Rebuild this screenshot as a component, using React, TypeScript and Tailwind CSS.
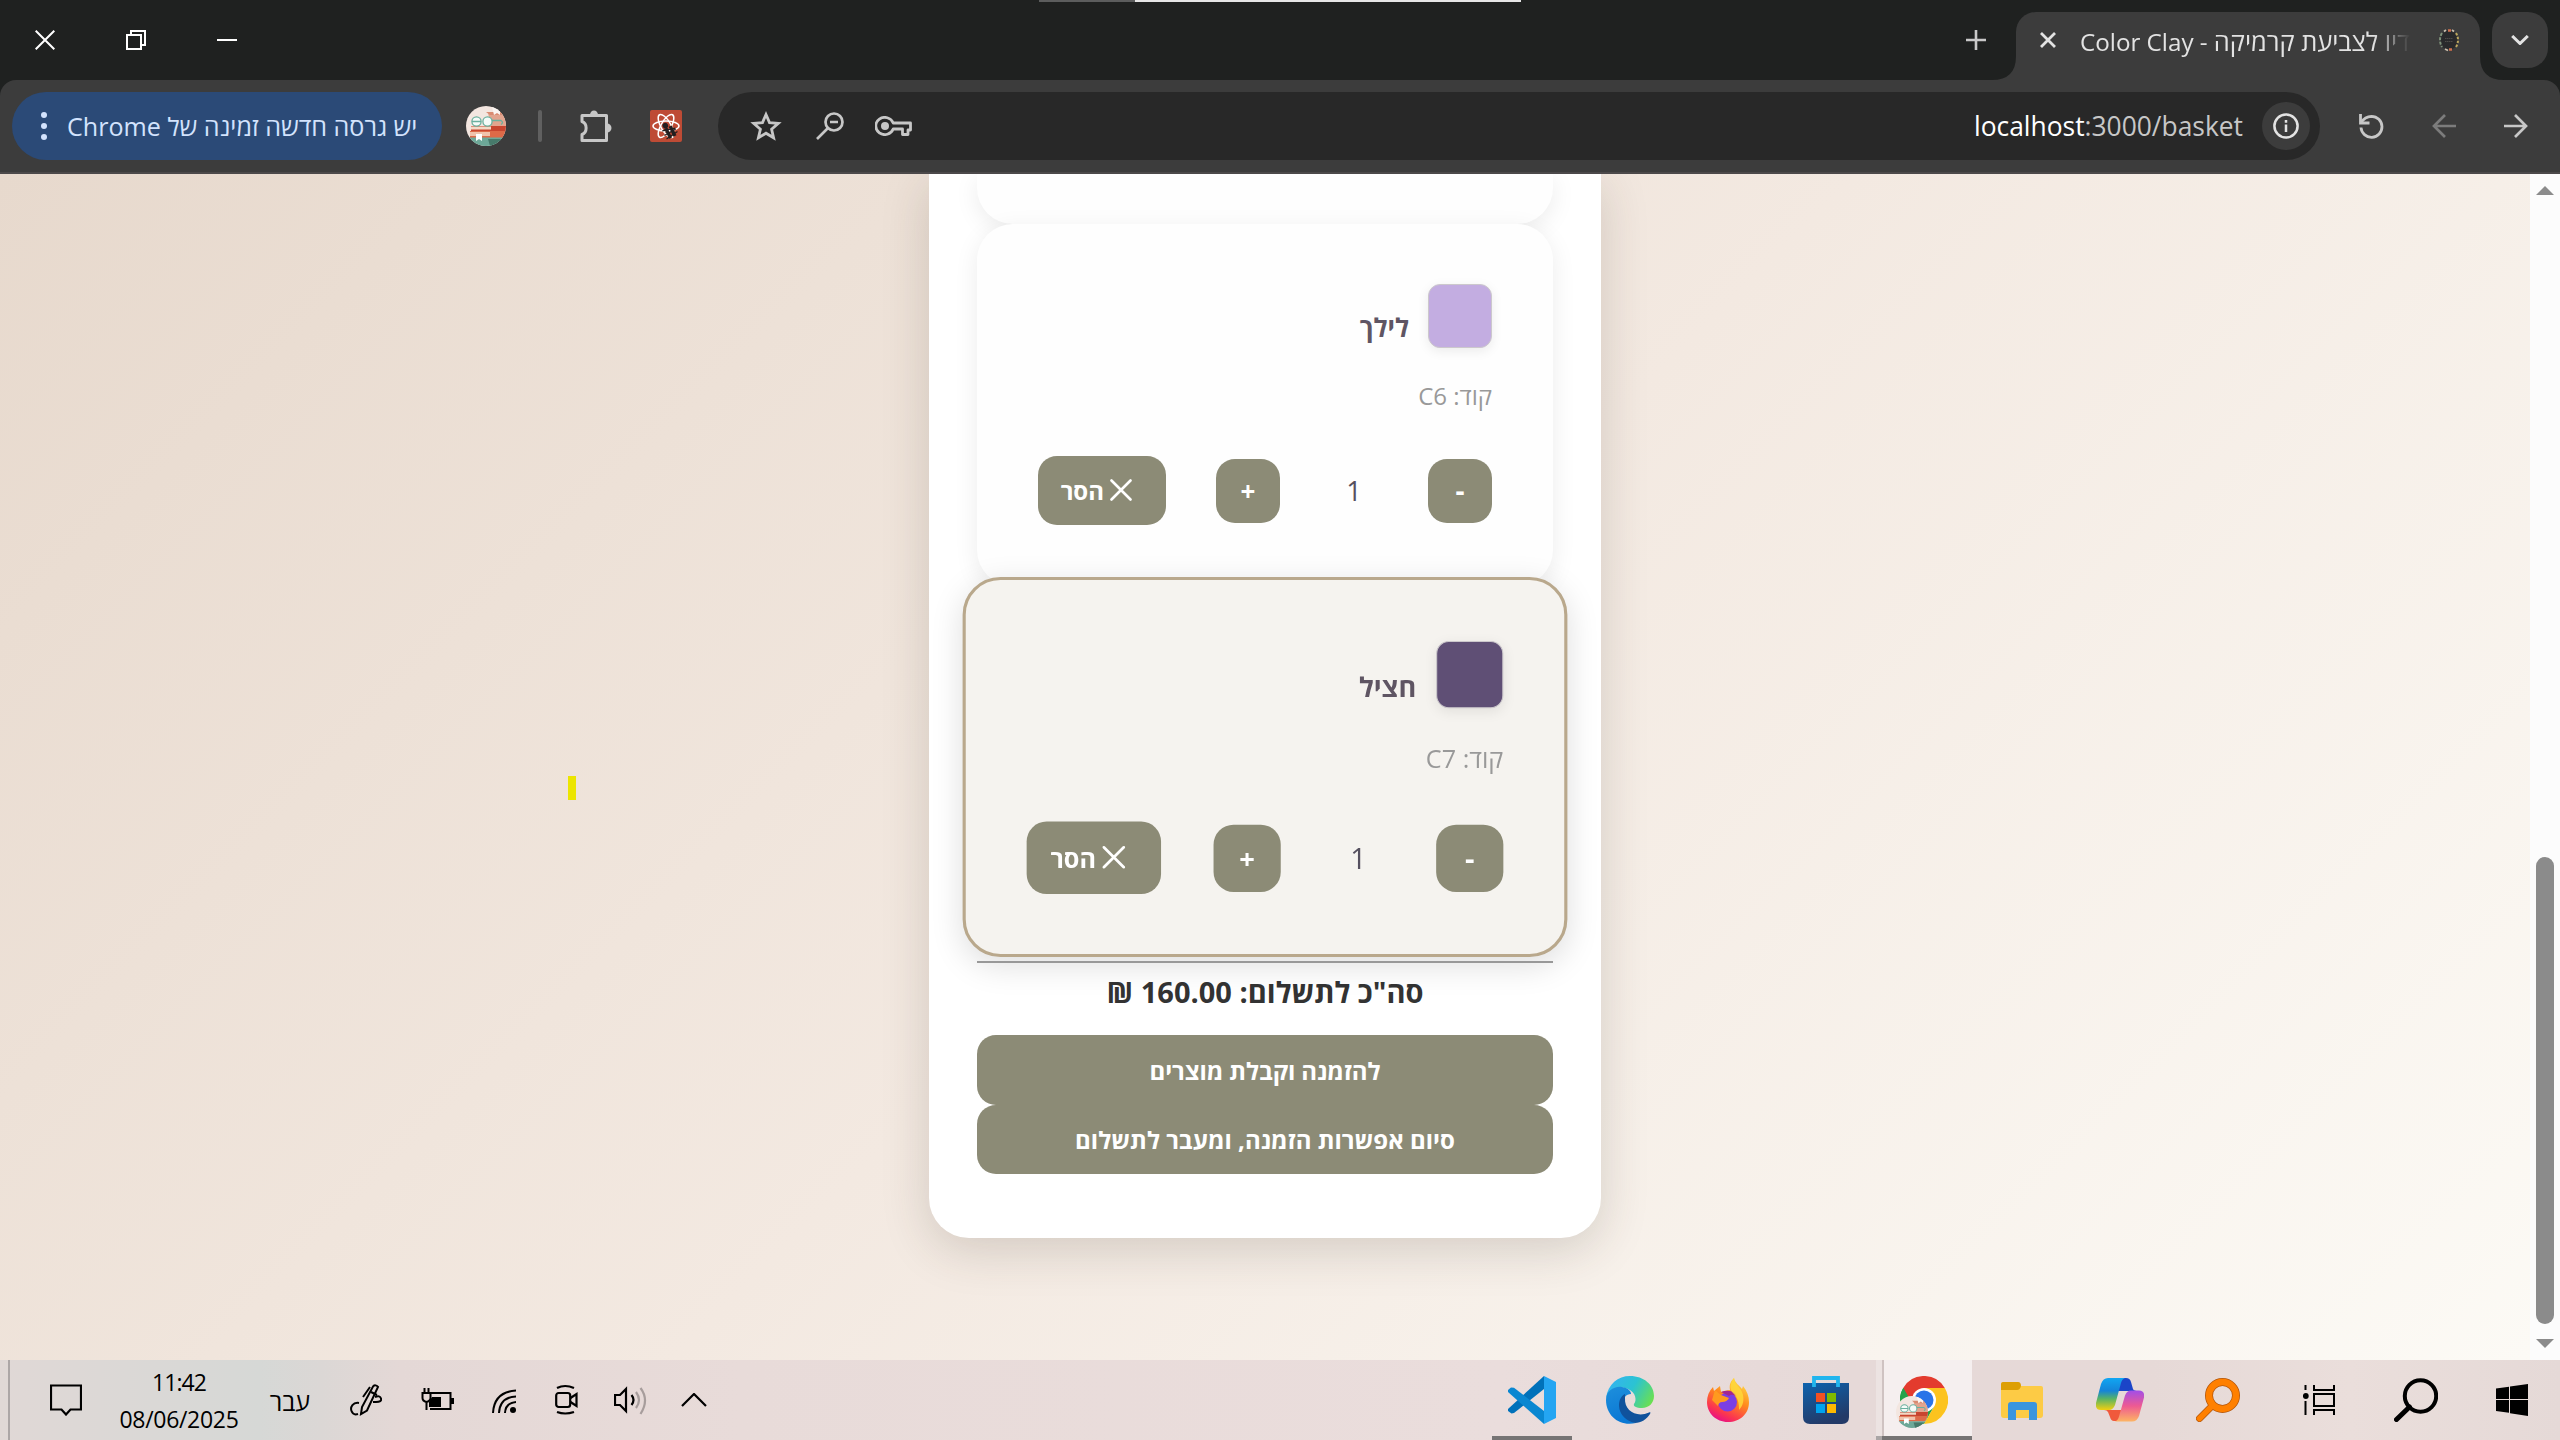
import React from "react";

function Avatar({ className, id }: { className: string; id: string }) {
  return (
    <svg viewBox="0 0 40 40" className={className}>
      <defs>
        <clipPath id={id}>
          <circle cx="20" cy="20" r="20" />
        </clipPath>
      </defs>
      <g clipPath={`url(#${id})`}>
        <rect width="40" height="40" fill="#f3e6e0" />
        <path d="M22 7h18v14H25z" fill="#e2a48e" />
        <path d="M20 6h16v3H24z" fill="#d98b71" />
        <path d="M26 1h8v8l-3-2-3 2z" fill="#fbf5f1" />
        <path d="M5 20h35v5H5z" fill="#c8452f" />
        <path d="M5 20.500h20v3H5z" fill="#f3d9c6" />
        <path d="M4 25h36v7H4z" fill="#dd6a48" />
        <path d="M4 26h20v4H4z" fill="#f0c3ac" />
        <path d="M0 31.500h40V40H0z" fill="#6da898" />
        <path d="M22 33h18l-6 7H24z" fill="#477a6b" />
        <path d="M10 28h6v7l-3-2-3 2z" fill="#fff" />
        <circle cx="10.500" cy="15.500" r="4.600" fill="#f5fbf8" stroke="#6ab09e" strokeWidth="1.300" />
        <circle cx="21.500" cy="15.500" r="4.600" fill="#f5fbf8" stroke="#6ab09e" strokeWidth="1.300" />
        <path d="M6 15.500h9M26 14.500h9q3 2 0 4" fill="none" stroke="#6ab09e" strokeWidth="1.300" />
      </g>
    </svg>
  );
}

function TitleBar() {
  return (
    <header className="flex h-20 items-center bg-[#1f2120] text-white">
      <div className="-ml-[1px] flex">
        <div className="flex w-[91px] justify-center">
          <svg viewBox="0 0 20 20" className="h-5 w-5" fill="none" stroke="#fff" strokeWidth="2">
            <path d="M.7.7l18.600 18.600M19.300.7L.7 19.300" />
          </svg>
        </div>
        <div className="flex w-[91px] justify-center">
          <svg viewBox="0 0 20 20" className="h-5 w-5" fill="none" stroke="#fff" strokeWidth="2">
            <path d="M1 5h14v14H1zM5 5V1h14v14h-4" />
          </svg>
        </div>
        <div className="flex w-[92px] justify-center">
          <svg viewBox="0 0 20 20" className="h-5 w-5" stroke="#fff" strokeWidth="2">
            <path d="M0 10h20" />
          </svg>
        </div>
      </div>
      <div className="ml-[766px] flex self-start">
        <div className="h-[2px] w-24 bg-[#5c5d5d]" />
        <div className="h-[2px] w-[386px] bg-[#e6e6e6]" />
      </div>
      <div className="ml-auto flex h-full items-center pr-3">
        <svg viewBox="0 0 20 20" className="h-5 w-5" stroke="#c9c9c9" strokeWidth="2.600">
          <path d="M10 0v20M0 10h20" />
        </svg>
        <div className="relative ml-[30px] flex h-[68px] w-[464px] items-center self-end rounded-t-[20px] bg-[#3c3c3c] pb-3">
          <svg viewBox="0 0 24 24" className="absolute bottom-0 -left-6 h-6 w-6">
            <path d="M24 0v24H0Q24 24 24 0z" fill="#3c3c3c" />
          </svg>
          <svg viewBox="0 0 24 24" className="absolute -right-6 bottom-0 h-6 w-6">
            <path d="M0 0v24h24Q0 24 0 0z" fill="#3c3c3c" />
          </svg>
          <svg viewBox="0 0 16 16" className="ml-6 h-4 w-4" stroke="#e3e3e3" strokeWidth="2.800">
            <path d="M1 1l14 14M15 1L1 15" />
          </svg>
          <div className="mt-[3px] ml-[24px] w-[337px] text-[24.2px] leading-9 whitespace-nowrap text-[#e3e3e3] [mask-image:linear-gradient(to_right,black_87%,transparent_98%)]">
            Color Clay - <span className="text-[25.4px]">דיו לצביעת קרמיקה</span>
          </div>
          <svg viewBox="0 0 24 24" className="ml-[20px] h-6 w-6">
            <ellipse cx="12" cy="12" rx="9" ry="10" fill="#29292b" />
            <path d="M5 5q-4 7 0 14" fill="none" stroke="#7d8f78" strokeWidth="2" strokeDasharray="3 1.500" />
            <path d="M19 5q4 7 0 14" fill="none" stroke="#bda75e" strokeWidth="2" strokeDasharray="2.500 1.500" />
            <path d="M7 3.500l2-1.500M17 3.500l-2-1.500M8 21l3 1.500" stroke="#c9bfae" strokeWidth="1.800" />
            <path d="M11 2.500h3M12 21.500h3" stroke="#d0704e" strokeWidth="2.500" />
            <path d="M8 10.500h8M8 13.500h8" stroke="#4d4b48" strokeWidth="1.200" strokeDasharray="1.500 .5" />
          </svg>
        </div>
        <div className="ml-3 flex h-14 w-14 items-center justify-center rounded-[20px] bg-[#3c3c3c]">
          <svg viewBox="0 0 18 10" className="h-[10px] w-[18px]" fill="none" stroke="#e3e3e3" strokeWidth="3">
            <path d="M1.200 1L9 8.500 16.800 1" />
          </svg>
        </div>
      </div>
    </header>
  );
}

function ToolBar() {
  return (
    <div className="bg-[#1f2120]">
      <div className="flex h-[94px] items-center rounded-t-[16px] border-b-2 border-[#4c494a] bg-[#3c3c3c] px-3">
        <div className="flex h-[68px] w-[430px] items-center rounded-full bg-[#2b4a77] text-[#d3e3fd]">
          <svg viewBox="0 0 6 28" className="ml-[29px] h-7 w-[6px]" fill="#d3e3fd">
            <circle cx="3" cy="3" r="3" />
            <circle cx="3" cy="14" r="3" />
            <circle cx="3" cy="25" r="3" />
          </svg>
          <div dir="rtl" className="ml-[20px] text-[25.1px] leading-9 whitespace-nowrap">
            יש גרסה חדשה זמינה של Chrome
          </div>
        </div>
        <Avatar id="profile-clip" className="ml-6 h-10 w-10" />
        <div className="ml-8 h-8 w-1 rounded bg-[#606060]" />
        <svg viewBox="0 0 32 32" className="ml-[38px] h-8 w-8">
          <path d="M2 5.500H26.500V30.500H2V24.500C7.500 22.500 7.500 13.500 2 11.500Z" fill="none" stroke="#c7c7c7" strokeWidth="3" strokeLinejoin="round" />
          <path d="M10 5a4 4.500 0 0 1 8 0zM27 13.500a4.500 4.500 0 0 1 0 9z" fill="#c7c7c7" />
        </svg>
        <svg viewBox="0 0 32 32" className="ml-[38px] h-8 w-8">
          <rect width="32" height="32" rx="2" fill="#be4b35" />
          <g fill="none" stroke="#fff" strokeWidth="1.500">
            <ellipse cx="16" cy="16" rx="13" ry="5" />
            <ellipse cx="16" cy="16" rx="13" ry="5" transform="rotate(60 16 16)" />
            <ellipse cx="16" cy="16" rx="13" ry="5" transform="rotate(120 16 16)" />
          </g>
          <g transform="rotate(-25 19 20)" fill="#231f20">
            <circle cx="17.500" cy="14.500" r="2.800" />
            <path d="M15 17h3.600v11H15.500zM20 17h3.500v11H20z" />
            <path d="M12.500 18l13 3M12.500 23l13-1M13 27l13-2" stroke="#231f20" strokeWidth="1.200" />
          </g>
        </svg>
        <div className="ml-9 flex h-[68px] w-[1602px] items-center rounded-full bg-[#282828] pr-[10px] pl-8">
          <svg viewBox="0 0 32 32" className="h-8 w-8" fill="none" stroke="#c7c7c7" strokeWidth="2.800">
            <path d="M16 4.500l3.500 8.100 8.800.8-6.700 5.800 2 8.600L16 23.200l-7.600 4.600 2-8.600-6.700-5.800 8.800-.8z" />
          </svg>
          <svg viewBox="0 0 28 28" className="ml-[34px] h-7 w-7" fill="none" stroke="#c7c7c7" strokeWidth="2.700">
            <circle cx="18" cy="10" r="8.500" />
            <path d="M12 16L1 27M14 10h8" />
          </svg>
          <svg viewBox="0 0 37 20" className="ml-[31px] h-5 w-[37px]" fill="none" stroke="#c7c7c7" strokeWidth="2.800">
            <path d="M18.200 7H35.500V14H33V18.500H27.500V13H18.200A9 8.600 0 1 1 18.200 7z" strokeLinejoin="round" />
            <circle cx="10" cy="10" r="4" fill="#c7c7c7" stroke="none" />
          </svg>
          <div className="ml-auto text-[26.4px] leading-9 text-[#c7c7c7]">
            <span className="text-white">localhost</span>:3000/basket
          </div>
          <div className="ml-[19px] flex h-12 w-12 items-center justify-center rounded-full bg-[#3c3c3c]">
            <svg viewBox="0 0 26 26" className="h-[26px] w-[26px]" fill="none" stroke="#e3e3e3" strokeWidth="2.500">
              <circle cx="13" cy="13" r="11.600" />
              <path d="M13 11.500v7.500M13 7v2.800" />
            </svg>
          </div>
        </div>
        <svg viewBox="0 0 25 25" className="ml-[39px] h-[25px] w-[25px]" fill="none" stroke="#c7c7c7" strokeWidth="2.800">
          <path d="M1.500 0v9h9" />
          <path d="M2 13.500A10.500 10.500 0 1 0 12.500 2.300Q6 2.500 2 8.500" />
        </svg>
        <svg viewBox="0 0 24 24" className="ml-12 h-6 w-6" fill="none" stroke="#7c7c7c" strokeWidth="2.700">
          <path d="M24 12H2M13 1L2 12l11 11" />
        </svg>
        <svg viewBox="0 0 24 24" className="ml-12 h-6 w-6" fill="none" stroke="#c7c7c7" strokeWidth="2.700">
          <path d="M0 12h22M11 1l11 11-11 11" />
        </svg>
      </div>
    </div>
  );
}

function BasketItem({ name, code, swatch, selected }: { name: string; code: string; swatch: string; selected?: boolean }) {
  const box = selected
    ? "relative scale-105 border-[3px] border-[#b9a88c] bg-[#f5f3ef] px-[58px] pt-[58px] shadow-[0_8px_30px_rgba(0,0,0,0.13)]"
    : "border border-transparent bg-[#fefefe] px-[60px] pt-[59px] shadow-[0_6px_24px_rgba(0,0,0,0.08)]";
  return (
    <div dir="rtl" className={`flex h-[362px] w-[576px] flex-col rounded-[36px] ${box}`}>
      <div className="flex h-16">
        <div className={`h-16 w-16 rounded-[12px] border border-[#ccc8cc] shadow-[0_3px_12px_rgba(0,0,0,0.08)] ${swatch}`} />
        <div className="mr-[19px] pt-[25px] text-[25.8px] leading-9 font-bold text-[#5f5563]">{name}</div>
      </div>
      <div className="mt-[30px] text-[24px] leading-9 text-[#999]">{code}</div>
      <div className="mt-[42px] flex h-[69px] items-center text-2xl font-bold text-white">
        <div className="flex h-16 w-16 items-center justify-center rounded-[19px] bg-[#8c8b76] text-[28px]">-</div>
        <div className="w-[148px] text-center text-[27px] leading-9 font-normal text-[#55505f]">1</div>
        <div className="flex h-16 w-16 items-center justify-center rounded-[19px] bg-[#8c8b76] pt-[1px] text-[26px]">+</div>
        <div className="mr-[50px] flex h-[69px] w-32 items-center rounded-[19px] bg-[#8c8b76] pr-[34px]">
          <svg viewBox="0 0 22 22" className="-mt-[2px] h-[22px] w-[22px]" stroke="#fff" strokeWidth="2.600" strokeLinecap="round">
            <path d="M1.500 1.500l19 19M20.500 1.500l-19 19" />
          </svg>
          <span className="mr-[6px]">הסר</span>
        </div>
      </div>
    </div>
  );
}

function Page() {
  return (
    <div className="flex h-[1186px] overflow-hidden">
      <main className="relative flex flex-1 items-start justify-center bg-[linear-gradient(135deg,#e7d9cd_0%,#f3e9e1_50%,#fcfaf5_100%)]">
        <section className="flex h-[1064px] w-[672px] flex-col items-center rounded-b-[40px] bg-white shadow-[0_12px_48px_rgba(60,50,40,0.18)]">
          <div className="h-[50px] w-[576px] rounded-b-[36px] bg-[#fefefe] shadow-[0_6px_24px_rgba(0,0,0,0.08)]" />
          <BasketItem name="לילך" code="קוד: C6" swatch="bg-[#c3ade1]" />
          <BasketItem name="חציל" code="קוד: C7" swatch="bg-[#5f4f75]" selected />
          <div className="relative mt-[13px] h-[2px] w-[576px] bg-[#989898]" />
          <div dir="rtl" className="mt-[7px] text-[29px] leading-[44px] font-bold text-[#333]">
            סה"כ לתשלום: 160.00 ₪
          </div>
          <div dir="rtl" className="mt-[21px] flex h-[70px] w-[576px] items-center justify-center rounded-[19px] bg-[#8c8b76] pt-[2px] text-2xl font-bold tracking-[-0.1px] text-white">
            להזמנה וקבלת מוצרים
          </div>
          <div dir="rtl" className="flex h-[69px] w-[576px] items-center justify-center rounded-[19px] bg-[#8c8b76] pt-[1px] text-2xl font-bold text-white">
            סיום אפשרות הזמנה, ומעבר לתשלום
          </div>
        </section>
        <div className="absolute top-[602px] left-[568px] h-6 w-2 bg-[#ece500]" />
      </main>
      <div className="flex w-[30px] flex-col items-center bg-[#fcfcfc]">
        <svg viewBox="0 0 18 9" className="mt-[12px] h-[9px] w-[18px]" fill="#8b8b8b">
          <path d="M0 9L9 0l9 9z" />
        </svg>
        <div className="mt-[662px] h-[467px] w-[18px] rounded-full bg-[#8b8b8b]" />
        <svg viewBox="0 0 18 9" className="mt-[15px] h-[9px] w-[18px]" fill="#8b8b8b">
          <path d="M0 0l9 9 9-9z" />
        </svg>
      </div>
    </div>
  );
}

function Tray() {
  const ic = "h-8 shrink-0";
  return (
    <div className="flex h-20 items-center">
      <div className="ml-2 h-full w-[2px] bg-[#aca6a6]" />
      <svg viewBox="0 0 32 32" className="ml-[40px] h-8 w-8" fill="none" stroke="#000" strokeWidth="2.200">
        <path d="M1 1.500h30v24H20.500L16 30.500l-4.500-5H1z" />
      </svg>
      <div className="ml-[35px] flex w-[124px] flex-col items-center pt-[2px] text-[23px] leading-[37px] whitespace-nowrap">
        <span className="tracking-[-0.9px]">11:42</span>
        <span className="tracking-[-0.3px]">08/06/2025</span>
      </div>
      <div dir="rtl" className="ml-[27px] w-[42px] pt-[1px] text-[25px] leading-9">עבר</div>
      <svg viewBox="0 0 32 32" className={`${ic} ml-[40px] w-8`} fill="none" stroke="#000" strokeWidth="2">
        <path d="M9 19C3 18 0 23 1.500 27s5 3.500 6.500 3" />
        <path d="M11 30l1-7L23 2.500q2.500-2.500 5 .5L17 26.500z" />
        <path d="M20 3l-7 10M21 8l6 3M25 13q5-2 6 1.500t-5 3.500h-3" />
      </svg>
      <svg viewBox="0 0 33 32" className={`${ic} ml-[39px] w-[33px]`} fill="none" stroke="#000" strokeWidth="2">
        <path d="M9 9h20.500v16H9" />
        <path d="M11 13h9v10H8v-5z" fill="#000" stroke="none" />
        <path d="M31.500 14v6" strokeWidth="3" />
        <path d="M1.500 9h8v5q0 3-4 4-4-1-4-4zM3.500 4v5M7.500 4v5M5.500 18v8" />
      </svg>
      <svg viewBox="0 0 24 32" className={`${ic} ml-[38px] w-6`} fill="none" stroke="#000" strokeWidth="2">
        <path d="M1 29Q2 8 24 6.500M7 29Q8 13 24 12.500M13 29q.5-10 11-11" />
        <circle cx="21" cy="26" r="3" fill="#000" stroke="none" />
      </svg>
      <svg viewBox="0 0 23 32" className={`${ic} ml-[39px] w-[23px]`} fill="none" stroke="#000" strokeWidth="2.200">
        <rect x="1.200" y="9" width="14" height="14" rx="2.500" />
        <path d="M15.500 14l6-4v12l-6-4M2 4q8-4 17 0M2 28q8 3 17 0" />
      </svg>
      <svg viewBox="0 0 33 32" className={`${ic} ml-[36px] w-[33px]`} fill="none" stroke="#000" strokeWidth="2.200">
        <path d="M1 11h5l6-6v22l-6-6H1z" />
        <path d="M17.500 11q4 5 0 10" />
        <path d="M22 8q6 8 0 16M26.500 4q9 12 0 26" stroke="#a79d9c" />
      </svg>
      <svg viewBox="0 0 26 14" className="ml-[34px] h-[14px] w-[26px]" fill="none" stroke="#000" strokeWidth="2.200">
        <path d="M1 13L13 1l12 12" />
      </svg>
    </div>
  );
}

function AppSlot({ children, running }: { children: React.ReactNode; running?: boolean }) {
  return (
    <div className="relative flex h-20 w-[98px] items-center justify-center">
      {children}
      {running && <div className="absolute bottom-0 left-[9px] h-1 w-20 bg-[#767474]" />}
    </div>
  );
}

function TaskBar() {
  return (
    <footer className="flex h-20 justify-between bg-[linear-gradient(90deg,#e0d8d6_0,#dcd8d6_100px,#d6d8d6_260px,#dbd7d5_320px,#e4d8d6_400px,#e8dbd9_740px,#eadddc_1500px,#e6d9d8_1850px,#e6d9d7_2150px,#eadedb_2350px,#e5d9d7_2560px)] text-black">
      <Tray />
      <div className="-mr-[1px] flex">
        <AppSlot running>
          <svg viewBox="0 0 48 48" className="h-12 w-12">
            <path d="M36 0L0 33v2l3.500 2.500 2.500-.5L36 13z" fill="#0071ba" />
            <path d="M0 14l3-2.500 3 .3L36 35v13L0 16z" fill="#0a87d1" />
            <path d="M36 0l12 6v36l-12 6z" fill="#24a5f2" />
          </svg>
        </AppSlot>
        <AppSlot>
          <svg viewBox="0 0 48 48" className="h-12 w-12">
            <defs>
              <linearGradient id="edge-top" x1="0" y1=".3" x2="1" y2=".7">
                <stop offset="0" stopColor="#35b3f0" />
                <stop offset=".5" stopColor="#2bc3d2" />
                <stop offset="1" stopColor="#6be050" />
              </linearGradient>
              <linearGradient id="edge-body" x1="0" y1="0" x2=".3" y2="1">
                <stop offset="0" stopColor="#1e8fdc" />
                <stop offset="1" stopColor="#0a78d4" />
              </linearGradient>
            </defs>
            <path d="M0 22C2 8 12 0 24 0c14 0 24 9 24 20 0 7-5 12-12 12-6 0-9-2-8-4 3-3 2-12-6-15C14 9 4 13 0 22z" fill="url(#edge-top)" />
            <path d="M0 24C0 15 8 10 16 11c6 1 9 4 9 7-5 0-8 4-8 10 0 9 6 17 13 19C14 51 0 40 0 24z" fill="url(#edge-body)" />
            <path d="M19 18c-10 5-8 25 10 29 6 0 12-4 15-9 1-2 0-2-1-1.500C31 42 18 35 19 22z" fill="#10529c" />
          </svg>
        </AppSlot>
        <AppSlot>
          <svg viewBox="0 0 42 44" className="h-11 w-[42px]">
            <defs>
              <linearGradient id="fox-body" x1=".8" y1="0" x2=".3" y2="1">
                <stop offset="0" stopColor="#ffe14a" />
                <stop offset=".45" stopColor="#ff8a1c" />
                <stop offset=".8" stopColor="#fb3550" />
                <stop offset="1" stopColor="#e60d8b" />
              </linearGradient>
            </defs>
            <path d="M21 44C9 44 0 35 0 24c0-6 2-11 6-15l1 4 6-5 1 6c3-1 6-2 9-2-1-6 1-9 4-12 1 5 5 7 8 11l1-3c4 5 6 10 6 16 0 12-9 20-21 20z" fill="url(#fox-body)" />
            <circle cx="20.500" cy="24" r="9.500" fill="#7b3fe4" />
            <path d="M14 14q8-3 14 1l2 4q-5-4-8-1z" fill="#a4278f" />
            <path d="M8 12l6 5 8 3q-2 4-7 4c-2 0-4 2-4 4L5 22z" fill="#ff9a1f" />
            <path d="M27 0c1 7 6 9 8 14 3 7 1 14-3 18 0-8-1-12-6-17-4-4-3-10 1-15z" fill="#ffd83a" opacity=".85" />
          </svg>
        </AppSlot>
        <AppSlot>
          <svg viewBox="0 0 46 48" className="h-12 w-[46px]">
            <defs>
              <linearGradient id="store-bag" x1="0" y1="0" x2=".4" y2="1">
                <stop offset="0" stopColor="#0d63ae" />
                <stop offset="1" stopColor="#233a68" />
              </linearGradient>
            </defs>
            <path d="M0 7h46v34q0 7-7 7H7q-7 0-7-7z" fill="url(#store-bag)" />
            <path d="M11 11V2h24v9" fill="none" stroke="#21b5ee" strokeWidth="3.800" />
            <path d="M13 17h9v9h-9z" fill="#f25022" />
            <path d="M24 17h9v9h-9z" fill="#7fba00" />
            <path d="M13 28h9v9h-9z" fill="#00a4ef" />
            <path d="M24 28h9v9h-9z" fill="#ffb900" />
          </svg>
        </AppSlot>
        <div className="relative mr-[1px] ml-[1px] flex h-20 w-24 items-center justify-center bg-[#f5efef]">
          <div className="absolute inset-y-0 left-0 w-2 border-r-2 border-[#cfc3c2] bg-[#ece3e2]" />
          <svg viewBox="0 0 48 48" className="h-12 w-12">
            <path d="M3.200 12A24 24 0 0 0 24 48L34.400 30 24 24z" fill="#27a24a" />
            <path d="M44.800 12A24 24 0 0 1 24 48L34.400 30 24 12z" fill="#fcc31e" />
            <path d="M3.200 12L13.600 30 24 12z" fill="#27a24a" />
            <path d="M3.200 12A24 24 0 0 1 44.800 12H24z" fill="#e33b2e" />
            <path d="M3.200 12L13 29 24 12z" fill="#e33b2e" />
            <circle cx="24" cy="24" r="12" fill="#fff" />
            <circle cx="24" cy="24" r="9.500" fill="#2a74e8" />
            <path d="M3.200 12A24 24 0 0 0 0 26h11.500z" fill="#27a24a" />
          </svg>
          <Avatar id="badge-clip" className="absolute bottom-3 left-5 h-8 w-8" />
          <div className="absolute bottom-0 left-0 h-1 w-[6px] bg-[#aaa6a6]" />
          <div className="absolute right-0 bottom-0 left-[6px] h-1 bg-[#767474]" />
        </div>
        <AppSlot>
          <svg viewBox="0 0 44 40" className="h-10 w-11">
            <path d="M1 6q0-4 3-4h14l3 4h20q2 0 2 2v27q0 3-3 3H4q-3 0-3-3z" fill="#fdcb45" />
            <path d="M1 10V4q0-2 2-2h15q3 0 3 4-1 4-4 4z" fill="#dd9f04" />
            <path d="M8 40V25q0-3 3-3h23q3 0 3 3v15h-8V30H16v10z" fill="#3a95de" />
          </svg>
        </AppSlot>
        <AppSlot>
          <svg viewBox="0 0 48 44" className="h-11 w-12">
            <defs>
              <linearGradient id="cop-a" x1="0" y1="0" x2="0" y2="1">
                <stop offset="0" stopColor="#11a6f2" />
                <stop offset=".4" stopColor="#1584d8" />
                <stop offset=".65" stopColor="#58b365" />
                <stop offset="1" stopColor="#f2cf10" />
              </linearGradient>
              <linearGradient id="cop-b" x1="0" y1="0" x2="0" y2="1">
                <stop offset="0" stopColor="#a24ee8" />
                <stop offset=".5" stopColor="#ee5a92" />
                <stop offset="1" stopColor="#fdb463" />
              </linearGradient>
            </defs>
            <path d="M22 0h8q4 0 5 4l2 7q1 2 5 2H22z" fill="#1b45c8" />
            <path d="M26 43h-8q-3 0-4-4l-2-5q-1-2-4-2h18z" fill="#f0593c" />
            <path d="M12 0h17q-3 1-4 5l-6 22q-2 5-6 5H5q-6 0-5-7L5 6q2-6 7-6z" fill="url(#cop-a)" />
            <path d="M36 43.500H19q3-1 4-5l6-21q2-5 6-5h8q6 0 5 7L43 38q-2 5.500-7 5.500z" fill="url(#cop-b)" />
          </svg>
        </AppSlot>
        <AppSlot>
          <svg viewBox="0 0 44 44" className="h-11 w-11" fill="none">
            <path d="M3.500 40.500L17 27" stroke="#b3560c" strokeWidth="7" strokeLinecap="round" />
            <circle cx="26.500" cy="17.500" r="13.500" stroke="#b3560c" strokeWidth="8" />
            <circle cx="26.500" cy="17.500" r="13.500" stroke="#ff8000" strokeWidth="6.500" />
            <path d="M3.500 40.500L17 27" stroke="#ff8000" strokeWidth="5.500" strokeLinecap="round" />
          </svg>
        </AppSlot>
        <AppSlot>
          <svg viewBox="0 0 32 30" className="ml-[6px] h-[30px] w-8" fill="none" stroke="#000" strokeWidth="2">
            <path d="M11 0v5h20V0M11 9h20v12H11zM11 30v-5h20v5M2.500 0v5M2.500 16v14" />
            <circle cx="2.800" cy="11" r="2.900" fill="#000" stroke="none" />
          </svg>
        </AppSlot>
        <AppSlot>
          <svg viewBox="0 0 44 44" className="ml-[4px] h-11 w-11" fill="none" stroke="#000">
            <circle cx="26.500" cy="18" r="15.700" strokeWidth="4" />
            <path d="M2.500 41.500L15.500 29" strokeWidth="5" strokeLinecap="round" />
          </svg>
        </AppSlot>
        <AppSlot>
          <svg viewBox="0 0 32 32" className="h-8 w-8" fill="#000">
            <path d="M0 4.500l13-1.800V15H0zM14 2.500L32 0v15H14zM0 16h13v12.800L0 27zM14 16h18v16l-18-2.800z" />
          </svg>
        </AppSlot>
      </div>
    </footer>
  );
}

export default function App() {
  return (
    <div className="h-[1440px] w-[2560px] overflow-hidden font-['Open_Sans','Liberation_Sans',sans-serif]">
      <TitleBar />
      <ToolBar />
      <Page />
      <TaskBar />
    </div>
  );
}
